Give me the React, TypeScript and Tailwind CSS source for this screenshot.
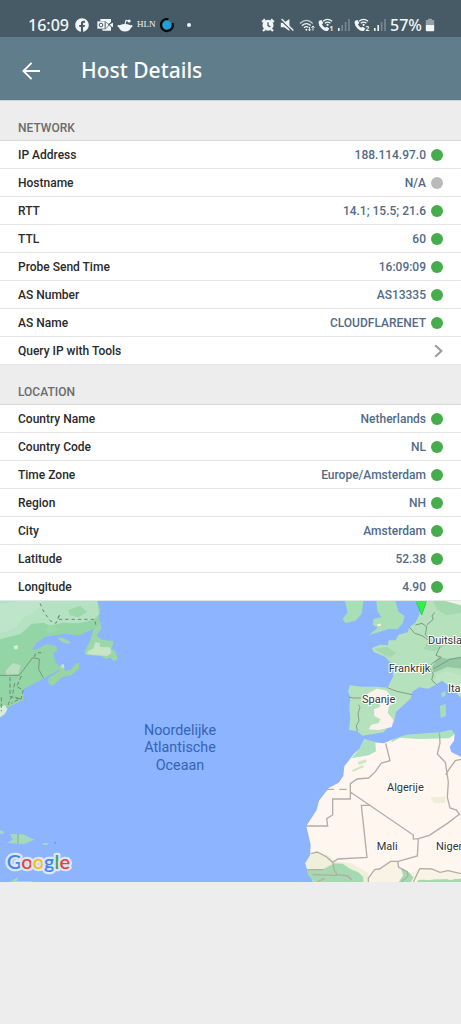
import type { ReactNode } from "react";
import { FaFacebook } from "react-icons/fa";

type Detail = {
  label: string;
  value: string;
  known?: boolean;
};

const network: Detail[] = [
  { label: "IP Address", value: "188.114.97.0" },
  { label: "Hostname", value: "N/A", known: false },
  { label: "RTT", value: "14.1; 15.5; 21.6" },
  { label: "TTL", value: "60" },
  { label: "Probe Send Time", value: "16:09:09" },
  { label: "AS Number", value: "AS13335" },
  { label: "AS Name", value: "CLOUDFLARENET" },
];

const location: Detail[] = [
  { label: "Country Name", value: "Netherlands" },
  { label: "Country Code", value: "NL" },
  { label: "Time Zone", value: "Europe/Amsterdam" },
  { label: "Region", value: "NH" },
  { label: "City", value: "Amsterdam" },
  { label: "Latitude", value: "52.38" },
  { label: "Longitude", value: "4.90" },
];

function OutlookIcon() {
  return (
    <svg viewBox="0 0 48 42" className="h-3.5 w-4" fill="currentColor">
      <path d="M10 3H42V12L32 20L42 27V38H16V34H26V10H10Z" />
      <path d="M48 14V28L34 21Z" />
      <path d="M1 10H23V32H1Z" />
      <path d="M26 12L42 24M27 32L42 14" stroke="#475b66" strokeWidth="2" />
      <circle cx="12" cy="21" r="5.5" fill="none" stroke="#475b66" strokeWidth="3" />
    </svg>
  );
}

function RedditIcon() {
  return (
    <svg viewBox="0 0 16 16" className="size-4" fill="currentColor">
      <path d="M2.6 8.2Q8 5.6 13.4 8.2Q15.6 7.6 15.5 9.2Q15.3 10.4 14 10.6Q12.8 14.6 8 14.6Q3.2 14.6 2 10.6Q.6 10.2.5 9.1Q.5 7.7 2.6 8.2Z" />
      <path d="M8 7.4L9 3.4L12 4" fill="none" stroke="currentColor" strokeWidth="1.1" />
      <circle cx="12.2" cy="4" r="1.5" />
    </svg>
  );
}

function RingIcon() {
  return (
    <svg viewBox="0 0 16 16" className="size-4">
      <circle cx="8" cy="8" r="4.6" fill="#1c9fdc" />
      <path d="M9.4 2.2A6 6 0 1 0 13.6 6" fill="none" stroke="#05090c" strokeWidth="2.2" />
    </svg>
  );
}

function AlarmIcon() {
  return (
    <svg viewBox="0 0 14 14" className="size-3.5" fill="none" stroke="currentColor">
      <circle cx="7" cy="7.2" r="5.5" fill="currentColor" stroke="none" />
      <path d="M1.2 4L4 1.4M12.8 4L10 1.4M2 13L3.8 11.2M12 13L10.2 11.2" strokeWidth="2.2" />
      <path d="M7 4.2V7.6L9.4 8.8" stroke="#475b66" strokeWidth="1.3" />
    </svg>
  );
}

function MuteIcon() {
  return (
    <svg viewBox="0 0 14 14" className="size-3.5" fill="currentColor">
      <path d="M.8 4.8H4.2L9.4 1V13L4.2 9.2H.8Z" />
      <path d="M.6 2L12.4 13.4" stroke="#475b66" strokeWidth="1.2" />
      <path d="M1.6 1L13.4 12.6" stroke="currentColor" strokeWidth="1.4" />
    </svg>
  );
}

function WifiIcon() {
  return (
    <svg viewBox="0 0 17 14" className="h-3.5 w-4" fill="none" stroke="currentColor" strokeWidth="1.3">
      <path d="M1 5.4Q8 -1.2 14.6 5.4" opacity=".75" />
      <path d="M3 7.8Q7.8 3.2 12.4 7.6" />
      <path d="M5.2 10Q7.8 7.6 10 9.6" />
      <circle cx="7.8" cy="12" r="1" fill="currentColor" stroke="none" />
      <path d="M11.2 9V13M9.8 11.6L11.2 13.2L12.6 11.6M14.8 13V8M13.2 9.8L14.8 8L16.4 9.8" strokeWidth="1" />
    </svg>
  );
}

function CallIcon({ sim }: { sim: number }) {
  return (
    <svg viewBox="0 0 17 14" className="h-3.5 w-4" fill="none" stroke="currentColor">
      <path d="M1.2 2.4L3.8 1.6L5.6 4.8L4.2 6.4Q5.2 8.6 7.6 9.8L9.2 8.8L12 10.8L10.6 13Q7.6 14.4 4 11Q-.8 6 1.2 2.4Z" fill="currentColor" stroke="none" />
      <path d="M5.4 3Q10 -1 15 3M7.2 5.2Q10.2 2.6 13.2 5.2" strokeWidth="1.3" />
      <circle cx="10.2" cy="6.8" r="1.2" fill="currentColor" stroke="none" />
      <text x="12.2" y="13.4" fontSize="7" fontWeight="700" fill="currentColor" stroke="none">
        {sim}
      </text>
    </svg>
  );
}

function SignalIcon({ strength }: { strength: number }) {
  return (
    <svg viewBox="0 0 14 14" className="size-3.5" fill="currentColor">
      {[3, 6, 9, 12].map((h, i) => (
        <rect key={h} x={1 + i * 3.4} y={13 - h} width="1.6" height={h} opacity={i < strength ? 1 : 0.3} />
      ))}
    </svg>
  );
}

function BatteryIcon() {
  return (
    <svg viewBox="0 0 10 14" className="h-3.5 w-2.5" fill="currentColor">
      <path d="M3 .8H7V2H9.2V7H.8V2H3Z" opacity=".45" />
      <path d="M.8 7H9.2V12.2Q9.2 13.2 8.2 13.2H1.8Q.8 13.2.8 12.2Z" />
    </svg>
  );
}

function StatusBar() {
  return (
    <div className="flex h-[37px] items-center justify-between bg-[#475b66] pt-4 pr-[26px] pb-1 pl-7 text-[#f2f5f6]">
      <div className="flex items-center gap-1">
        <span className="mr-0.5 text-base font-medium">16:09</span>
        <FaFacebook className="mr-1 size-3.5" />
        <OutlookIcon />
        <RedditIcon />
        <span className="font-['Liberation_Serif',serif] text-[9px]">HLN</span>
        <RingIcon />
        <span className="ml-2 size-1 rounded-full bg-current" />
      </div>
      <div className="flex items-center gap-[3px]">
        <AlarmIcon />
        <span className="mx-0.5">
          <MuteIcon />
        </span>
        <WifiIcon />
        <CallIcon sim={1} />
        <SignalIcon strength={1} />
        <CallIcon sim={2} />
        <SignalIcon strength={2} />
        <span className="text-base font-medium">57%</span>
        <BatteryIcon />
      </div>
    </div>
  );
}

function Toolbar() {
  return (
    <header className="flex h-16 items-center gap-10 border-b border-[#cdd4d8] bg-[#607d8c] px-[21px] pt-1 text-white">
      <button type="button" aria-label="Back">
        <svg viewBox="0 0 20 20" className="size-5" fill="none" stroke="currentColor" strokeWidth="1.9">
          <path d="M19 10H2.6M10.6 1.8L2.4 10L10.6 18.2" />
        </svg>
      </button>
      <h1 className="text-[21px] font-medium">Host Details</h1>
    </header>
  );
}

function Section({ title, items, children }: { title: string; items: Detail[]; children?: ReactNode }) {
  return (
    <section>
      <h2 className="flex h-10 items-end border-b border-[#d8d8d8] pb-1 pl-[18px] text-xs leading-4 font-medium text-[#6b6b6b]">
        {title}
      </h2>
      <dl className="bg-white">
        {items.map((item) => (
          <div key={item.label} className="flex h-7 items-center border-b border-[#e3e6e6] px-[18px] text-xs">
            <dt className="font-medium text-[#2a2a2a]">{item.label}</dt>
            <dd className="ml-auto flex items-center gap-[5px] font-medium text-[#526b87]">
              {item.value}
              <span className={`size-3 rounded-full ${item.known === false ? "bg-[#bababa]" : "bg-[#45ad4c]"}`} />
            </dd>
          </div>
        ))}
      </dl>
      {children}
    </section>
  );
}

const logo = [
  ["G", "#4285f4"],
  ["o", "#ea4335"],
  ["o", "#f4c20d"],
  ["g", "#4285f4"],
  ["l", "#34a853"],
  ["e", "#ea4335"],
];

function LocationMap() {
  return (
    <svg
      viewBox="0 0 1383 843"
      preserveAspectRatio="xMidYMid slice"
      role="img"
      aria-label="Map"
      className="block aspect-[461/281] w-full bg-[#8cb4ff]"
    >
      {/* Canada */}
      <g transform="translate(0 -33)">
        <path d="M0 33H292L302 58L296 82L304 104L287 107L278 118L238 136L194 132L137 140L110 158L97 178L104 180L140 162L169 168L172 183L160 190L166 215L176 226L173 243L128 266L72 297L70 330L26 351L16 371L0 382Z" fill="#94d5a5" />
        <path d="M0 33H292L298 72L280 90L235 100L188 98L150 107L130 98L95 102L62 132L0 148Z" fill="#b5e2c3" />
        <path d="M0 42L52 33H130L110 62L70 82L50 112L0 132Z" fill="#bee5ca" />
        <path d="M150 104L135 122L152 130L180 118ZM205 60L240 48L262 66L236 82L210 76Z" fill="#9bd8aa" />
        <path d="M18 240L40 219L62 226L55 252L18 255Z" fill="#b8e0c0" />
        <path d="M40 168L55 166L52 178L44 178Z" fill="#d7ede0" />
        <path d="M0 352L15 345L22 358L14 372L0 382Z" fill="#d9eeda" />
        <path d="M300 103L282 112L271 151L253 186L256 195L305 199L318 208L330 202L342 214L353 207L347 184L335 177L341 153L306 149L290 137L305 115Z" fill="#9cd7a8" />
        <path d="M262 185L280 175L286 157L299 158L300 171L330 172L334 188L322 198L262 193Z" fill="#c8e5c8" />
        <path d="M174 143L189 144L212 157L205 162L185 156Z" fill="#a0d7b2" />
        <path d="M146 264L178 243L172 231L187 225L195 243L213 239L227 220L238 218L237 236L213 256L188 260L158 287L145 280Z" fill="#98d69d" />
        <path d="M183 224L192 222L193 235L184 233Z" fill="#c2e3cf" />
        <path d="M0 256H58L98 203L118 207L116 238L130 263" fill="none" stroke="#77977f" strokeWidth="3" />
        <path d="M120 40L132 66L150 92L168 100L180 72L172 88L188 88H284L287 104M103 200L108 188H134" fill="none" stroke="#6b8a76" strokeWidth="3" strokeDasharray="10 9" />
        <path d="M64 258L50 290L70 300L62 330L46 322M30 262V320L60 326L34 340M44 280L38 312L22 350M4 322V364" fill="none" stroke="#6b8a76" strokeWidth="3" strokeDasharray="12 7" />
      </g>

      {/* Western Europe */}
      <g transform="translate(900 -33)">
        <path d="M135 33H190L185 72L166 92L136 100L128 86L143 68Z" fill="#a9dfb5" />
        <path d="M229 33H286L296 66L314 78L308 100L293 118L268 116L238 126L207 135L233 113L218 104L221 86L244 82L232 62Z" fill="#aadfb6" />
        <path d="M365 33L358 74L346 98L328 112L323 127L296 134L287 151H266L264 166L240 164L216 174L221 186L255 200L276 222L280 259L262 293L232 290L184 290L150 286L144 304L151 322L148 352L151 387L147 419L172 424L187 437L250 427L282 396L288 366L333 325L337 305L357 292L384 296L405 286L426 272L448 288L483 324V33Z" fill="#b5e2bd" />
        <path d="M400 33H483V68L440 76L412 60ZM390 140L438 166L404 184L370 178ZM223 176L260 170L290 190L266 204Z" fill="#a4d9b0" />
        <path d="M396 230L416 202L443 206L483 200V236L442 231L414 243L400 248Z" fill="#94c8a4" />
        <path d="M402 285L410 252L440 244L483 256V320L448 288L425 270Z" fill="#bfe5c4" />
        <path d="M190 318L231 296L260 302L286 338L268 346L263 368L280 390L276 411L236 420L206 418L214 404L235 400L242 388L223 378L222 358L241 350L236 336L200 342L188 332Z" fill="#fbf3eb" />
        <path d="M435 33H483V46ZM231 102L243 101V108H233Z" fill="#f2f4e9" />
        <path d="M420 348L437 341L438 378L422 384ZM424 310L436 302V318L426 322Z" fill="#a9ddb9" />
        <path d="M262 293L290 304L337 314M148 321L160 324H183M176 344L180 352L174 370L177 392L169 407L172 423" fill="none" stroke="#859d8d" strokeWidth="3" />
        <path d="M328 111L344 130L366 137L386 151M346 105L366 100L380 110L376 134L393 152M404 67L396 78L400 88L380 105M420 170L408 196L424 202L398 219L386 231L400 252L395 270L410 284M400 237L424 223L450 208L483 202" fill="none" stroke="#7f9988" strokeWidth="3" />
        <path d="M347 33H381L365 75Z" fill="#2ff14b" />
        <path d="M350 38L365 75L378 39" fill="none" stroke="#23ba51" strokeWidth="2" />
      </g>

      {/* North Africa */}
      <g transform="translate(870 357)">
        <path d="M223 57L238 65L281 70L304 60L349 46L448 39L484 30L494 43L492 62L479 80L484 96L513 111V486H70L51 447L46 429L60 410L62 375L49 318L80 270L87 242L116 204L146 188L160 168L163 139L192 101L209 86Z" fill="#fff6f0" />
        <path d="M223 57L256 66L258 94L236 106L184 115L209 86ZM304 60L349 44L448 37L484 29L494 43L478 55L384 57L330 53L306 66Z" fill="#ade0bf" />
        <path d="M201 127L227 118L230 126L208 135ZM187 149L218 136L222 141L188 156Z" fill="#d0e6c6" />
        <path d="M60 406L82 399L112 404L137 425L184 430L235 458L238 486H70L46 430Z" fill="#eff0da" />
        <path d="M50 448L96 449L133 430L158 431L181 447L205 457L220 472V486H72L55 465ZM323 448L340 446L350 454L374 467L363 486H326L340 465ZM380 486L391 474L414 481L453 472L480 480L513 474V486Z" fill="#a5d9af" />
        <path d="M262 452L305 424L326 429L338 460L326 486H230ZM360 462L380 450L513 460V476L380 480Z" fill="#f8f3e4" />
        <path d="M420 232L466 230V250H432Z" fill="#f2eddb" />
        <path d="M287 70L300 122L274 129L256 155L236 174L201 177L181 191V237H128V285L110 296L113 318H49M181 216L370 345V357L385 356L418 346L472 310L508 283M242 256H214L231 412L144 417L128 427L110 411L82 396L62 401M385 357L382 408L325 424L302 424L268 447L254 449L235 475V486M448 38L450 69L442 102L466 127L475 186L472 232L480 264L499 270L510 285M513 118L496 122L479 145L467 164M323 424L326 442L352 455L354 468L334 486M370 486L389 446L425 447L450 457L474 452L513 461M128 427L133 450L141 464L174 468L185 480M50 449H100M68 464L140 466M84 484L104 475" fill="none" stroke="#b4aca9" strokeWidth="4" />
        <path d="M110 208H182" fill="none" stroke="#b4aca9" strokeWidth="4" strokeDasharray="22 16" />
      </g>

      {/* Caribbean */}
      <g transform="translate(0 597)">
        <path d="M0 91L14 96L8 103L0 102ZM30 102L70 103L103 119L72 132L22 129L38 119ZM128 129L145 130L143 136L130 135ZM30 246L54 231L50 243H94L100 246Z" fill="#a5d9bb" />
        <path d="M54 102V130" stroke="#8fa99a" strokeWidth="3" />
        <circle cx="166" cy="128" r="3" fill="#7396c1" />
      </g>

      <g fontSize="43" fill="#3565b3" textAnchor="middle">
        <text x="540" y="402">Noordelijke</text>
        <text x="540" y="454">Atlantische</text>
        <text x="540" y="506">Oceaan</text>
      </g>
      <g fontSize="33" fill="#333333" stroke="#ffffff" strokeWidth="6" strokeLinejoin="round" paintOrder="stroke">
        <text x="1284" y="130">Duitsland</text>
        <text x="1166" y="213">Frankrijk</text>
        <text x="1344" y="274">Italië</text>
        <text x="1086" y="306">Spanje</text>
        <text x="1161" y="570">Algerije</text>
        <text x="1130" y="747">Mali</text>
        <text x="1308" y="747">Niger</text>
      </g>
      <text
        x="20"
        y="803"
        fontSize="60"
        stroke="#dce6f8"
        strokeWidth="14"
        strokeLinejoin="round"
        paintOrder="stroke"
        className="font-['Lato',sans-serif] font-semibold"
      >
        {logo.map(([letter, color], i) => (
          <tspan key={i} fill={color}>
            {letter}
          </tspan>
        ))}
      </text>
    </svg>
  );
}

export default function App() {
  return (
    <div className="min-h-screen bg-[#ededed] font-['Noto_Sans',sans-serif]">
      <StatusBar />
      <Toolbar />
      <main className="font-['Roboto',sans-serif]">
        <Section title="NETWORK" items={network}>
          <button
            type="button"
            className="flex h-7 w-full items-center justify-between border-b border-[#e3e6e6] bg-white px-[18px] text-xs font-medium text-[#2a2a2a]"
          >
            Query IP with Tools
            <svg viewBox="0 0 9 14" className="h-3.5 w-[9px]" fill="none" stroke="#9b9b9b" strokeWidth="2">
              <path d="M1.2 1.2L7.4 7L1.2 12.8" />
            </svg>
          </button>
        </Section>
        <Section title="LOCATION" items={location} />
        <LocationMap />
      </main>
    </div>
  );
}
